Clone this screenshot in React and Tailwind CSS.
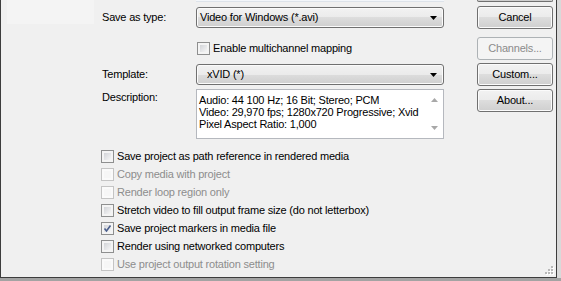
import React from 'react'

const font = "font-['Liberation_Sans',Arial,sans-serif] tracking-[-0.2px]"

const CheckBox = ({ checked, disabled }) => (
  <div
    className={`w-[13px] h-[13px] shrink-0 border p-[2px] ${
      disabled ? 'border-[#c4c4c4] bg-[#fafafa]' : 'border-[#8e8f8f] bg-[#f4f4f4]'
    }`}
  >
    <div
      className={`w-full h-full relative ${
        disabled ? 'bg-[#f6f6f6]' : 'bg-[linear-gradient(135deg,#d2d4d8,#f6f6f6)]'
      }`}
    >
      {checked && (
        <svg width="11" height="11" viewBox="0 0 11 11" className="absolute -left-[2px] -top-[2px]">
          <path d="M2.5 5.5 L4.5 8 L8.5 2.5" fill="none" stroke="#4a5e8c" strokeWidth="1.6" />
        </svg>
      )}
    </div>
  </div>
)

const Button = ({ children, disabled, className = '' }) => (
  <div
    className={`w-[76px] h-[23px] rounded-[3px] border flex items-center justify-center text-[11px] ${className} ${
      disabled
        ? 'border-[#adb2b5] bg-[#f4f4f4] text-[#8b8b8b]'
        : 'border-[#707070] bg-[linear-gradient(#f2f2f2,#ebebeb_50%,#dddddd_50%,#cfcfcf)] shadow-[inset_0_0_0_1px_#fbfbfb] text-black'
    }`}
  >
    {children}
  </div>
)

const Combo = ({ value, indent }) => (
  <div className="w-[248px] h-[21px] rounded-[3px] border border-[#707070] bg-[linear-gradient(#f2f2f2,#ebebeb_50%,#dddddd_50%,#cfcfcf)] shadow-[inset_0_0_0_1px_#fbfbfb] flex items-center text-[11px]">
    <span className={`flex-1 whitespace-nowrap ${indent ? 'pl-[10px]' : 'pl-[3px]'}`}>{value}</span>
    <svg width="7" height="4" viewBox="0 0 7 4" className="mr-[6px]">
      <path d="M0 0 H7 L3.5 4 Z" fill="#000" />
    </svg>
  </div>
)

const options = [
  { label: 'Save project as path reference in rendered media' },
  { label: 'Copy media with project', disabled: true },
  { label: 'Render loop region only', disabled: true },
  { label: 'Stretch video to fill output frame size (do not letterbox)' },
  { label: 'Save project markers in media file', checked: true },
  { label: 'Render using networked computers' },
  { label: 'Use project output rotation setting', disabled: true },
]

export default function App() {
  return (
    <div className={`w-[561px] h-[281px] bg-[#a3a3a3] overflow-hidden ${font}`}>
      <div className="flex h-[278px]">
        <div className="w-[557px] h-[278px] border-l border-r border-b border-[#3d3d3d] bg-[#f0f0f0] relative">
          {/* top strip: remains of controls above */}
          <div className="flex h-0">
            <div className="ml-[6px] w-[87px] h-[24px] bg-[#f4f4f4]" />
            <div className="ml-[102px] w-[248px] h-[2px] bg-[#f3f6fa] border-b border-[#dde3ea]" />
            <div className="ml-[33px] w-[76px] h-[2px] rounded-b-[3px] border-b border-l border-r border-[#707070] bg-[#cfcfcf]" />
          </div>

          <div className="flex">
            {/* left / middle column */}
            <div className="pl-[101px] w-[443px] text-[11px] text-black whitespace-nowrap">
              <div className="flex items-center mt-[7px] h-[21px]">
                <span className="w-[94px]">Save as type:</span>
                <Combo value="Video for Windows (*.avi)" />
              </div>

              <div className="flex items-center mt-[14px] h-[13px] pl-[95px] gap-[3px]">
                <CheckBox />
                <span>Enable multichannel mapping</span>
              </div>

              <div className="flex items-center mt-[9px] h-[21px]">
                <span className="w-[94px]">Template:</span>
                <Combo value="xVID (*)" indent />
              </div>

              <div className="flex mt-[4px]">
                <span className="w-[94px] pt-[2px] leading-[12px]">Description:</span>
                <div className="w-[248px] h-[50px] border border-[#b5b8be] bg-white flex">
                  <div className="flex-1 pl-[2px] pt-[4px] leading-[12px] text-[11px]">
                    <div>Audio: 44 100 Hz; 16 Bit; Stereo; PCM</div>
                    <div>Video: 29,970 fps; 1280x720 Progressive; Xvid</div>
                    <div>Pixel Aspect Ratio: 1,000</div>
                  </div>
                  <div className="w-[17px] flex flex-col items-center justify-between py-[8px]">
                    <svg width="7" height="4" viewBox="0 0 7 4">
                      <path d="M0 4 L3.5 0 L7 4 Z" fill="#a8a8a8" />
                    </svg>
                    <svg width="7" height="4" viewBox="0 0 7 4">
                      <path d="M0 0 H7 L3.5 4 Z" fill="#a8a8a8" />
                    </svg>
                  </div>
                </div>
              </div>
            </div>

            {/* buttons */}
            <div className="ml-[33px] flex flex-col pt-[6px]">
              <Button>Cancel</Button>
              <Button disabled className="mt-[8px]">Channels...</Button>
              <Button className="mt-[3px]">Custom...</Button>
              <Button className="mt-[3px]">About...</Button>
            </div>
          </div>

          {/* option checkboxes */}
          <div className="mt-[8px] pl-[100px] flex flex-col text-[11px] whitespace-nowrap">
            {options.map((o, i) => (
              <div key={`opt-${i}`} className="h-[18px] flex items-center gap-[3px]">
                <CheckBox checked={o.checked} disabled={o.disabled} />
                <span className={o.disabled ? 'text-[#8d8d8d]' : 'text-black'}>{o.label}</span>
              </div>
            ))}
          </div>

          {/* size grip */}
          <svg width="10" height="10" viewBox="0 0 10 10" className="absolute right-[2px] bottom-[2px]">
            {[
              [7, 1], [4, 4], [7, 4], [1, 7], [4, 7], [7, 7],
            ].map(([x, y], i) => (
              <g key={`dot-${i}`}>
                <rect x={x + 1} y={y + 1} width="2" height="2" fill="#ffffff" />
                <rect x={x} y={y} width="2" height="2" fill="#b8b8b8" />
              </g>
            ))}
          </svg>
        </div>
        <div className="flex-1 bg-[#d9d9d9]" />
      </div>
    </div>
  )
}
